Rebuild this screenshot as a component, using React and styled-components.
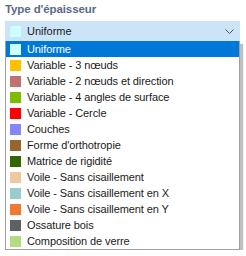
import styled, { createGlobalStyle } from 'styled-components';

const GlobalStyle = createGlobalStyle`
    body {
        margin: 0;
        background: #ffffff;
        font-family: "Liberation Sans", Arial, sans-serif;
    }
`;

const Panel = styled.div`
    width: 235px;
    padding: 2px 0 0 5px;
`;

const Label = styled.div`
    height: 15px;
    line-height: 15px;
    margin-bottom: 4px;
    font-size: 11.5px;
    font-weight: bold;
    letter-spacing: -0.1px;
    color: #5a6a84;
`;

const Select = styled.div`
    display: flex;
    align-items: center;
    height: 20px;
    padding: 0 5px;
    background: #cce4f7;
    font-size: 11px;
    color: #1a1a1a;
`;

const Swatch = styled.span`
    flex: none;
    width: 11px;
    height: 11px;
    margin-right: 6px;
    background: ${(p) => p.color};
`;

const Chevron = styled.svg`
    margin-left: auto;
    margin-right: 1px;
`;

const List = styled.ul`
    width: 233px;
    margin: 0;
    padding: 0;
    list-style: none;
    border: 1px solid #a0a0a0;
    border-top: none;
    box-shadow: 3px 3px 1px rgba(0, 0, 0, 0.25);
`;

const Item = styled.li`
    display: flex;
    align-items: center;
    height: 16px;
    padding-left: 4px;
    font-size: 11px;
    letter-spacing: -0.1px;
    color: ${(p) => (p.active ? '#ffffff' : '#1a1a1a')};
    background: ${(p) => (p.active ? '#0078d7' : 'transparent')};
`;

const types = [
    { name: 'Uniforme', color: '#ccffff' },
    { name: 'Variable - 3 nœuds', color: '#ffc000' },
    { name: 'Variable - 2 nœuds et direction', color: '#c07272' },
    { name: 'Variable - 4 angles de surface', color: '#7fbc00' },
    { name: 'Variable - Cercle', color: '#ff0000' },
    { name: 'Couches', color: '#8585ff' },
    { name: "Forme d'orthotropie", color: '#99652e' },
    { name: 'Matrice de rigidité', color: '#336600' },
    { name: 'Voile - Sans cisaillement', color: '#f0c8a0' },
    { name: 'Voile - Sans cisaillement en X', color: '#99cccc' },
    { name: 'Voile - Sans cisaillement en Y', color: '#f07832' },
    { name: 'Ossature bois', color: '#5f6067' },
    { name: 'Composition de verre', color: '#b3dc82' },
];

const App = () => {
    return (
        <Panel>
            <GlobalStyle />
            <Label>Type d'épaisseur</Label>
            <Select>
                <Swatch color="#ccffff" />
                Uniforme
                <Chevron width="9" height="5" viewBox="0 0 9 5">
                    <path d="M0.5 0.5 L4.5 4.5 L8.5 0.5" fill="none" stroke="#555" strokeWidth="1" />
                </Chevron>
            </Select>
            <List>
                {types.map((t, i) => (
                    <Item key={t.name} active={i === 0}>
                        <Swatch color={t.color} />
                        {t.name}
                    </Item>
                ))}
            </List>
        </Panel>
    );
};

export default App;
